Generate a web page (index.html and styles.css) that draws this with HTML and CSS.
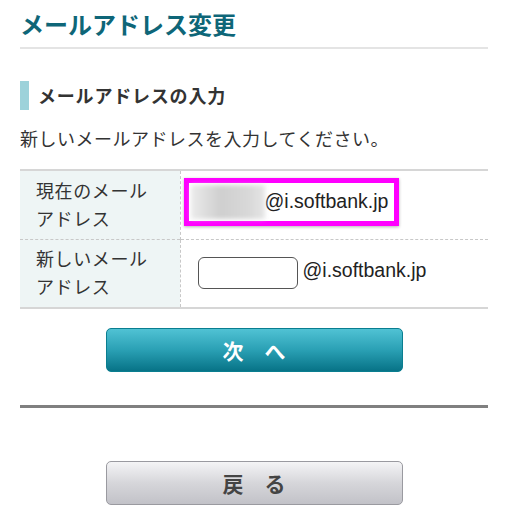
FILE: index.html
```html
<!DOCTYPE html>
<html lang="ja">
<head>
    <meta charset="UTF-8">
    <meta name="viewport" content="width=device-width, initial-scale=1.0">
    <title>メールアドレス変更</title>
    <link rel="stylesheet" href="styles.css">
</head>
<body>

    <h1 class="titulo">メールアドレス変更</h1>

    <h2 class="seccion">メールアドレスの入力</h2>
    <p class="guia">新しいメールアドレスを入力してください。</p>

    <table class="tabla">
        <tr>
            <th>現在のメール<br>アドレス</th>
            <td>
                <div class="actual">
                    <span class="oculto"></span><span class="dominio">@i.softbank.jp</span>
                </div>
            </td>
        </tr>
        <tr>
            <th>新しいメール<br>アドレス</th>
            <td>
                <input type="text" class="campo"><span class="dominio">@i.softbank.jp</span>
            </td>
        </tr>
    </table>

    <div class="acciones">
        <button class="btn btn-siguiente">次　へ</button>
    </div>

    <hr class="separador">

    <div class="acciones">
        <button class="btn btn-volver">戻　る</button>
    </div>

</body>
</html>
```

FILE: styles.css
```css
body { margin: 0; padding: 0 20px; background-color: #fff; color: #333; font-family: "Noto Sans CJK JP", "Liberation Sans", sans-serif; }
.titulo { margin: 0; padding: 7px 0 7px; font-size: 24px; line-height: 33px; color: #0e6678; border-bottom: 2px solid #e4e4e4; }
.seccion { margin: 32px 0 0; padding-left: 9px; border-left: 9px solid #9dd2da; font-size: 18px; letter-spacing: 0.8px; line-height: 29px; color: #333; }
.guia { margin: 14px 0 0; font-size: 18px; letter-spacing: 0.5px; line-height: 28px; }
.tabla { width: 100%; margin-top: 17px; border-collapse: collapse; border-top: 2px solid #d6d6d6; border-bottom: 2px solid #d6d6d6; }
.tabla th { width: 160px; box-sizing: border-box; padding: 0 0 2px 16px; height: 69px; background-color: #eef5f5; border-right: 1px dashed #c8c8c8; text-align: left; font-weight: normal; font-size: 18px; letter-spacing: 0.6px; line-height: 28px; color: #333; }
.tabla td { padding: 0 0 0 3px; }
.tabla tr + tr th, .tabla tr + tr td { border-top: 1px dashed #c8c8c8; }
.actual { display: flex; align-items: center; width: 200px; height: 38px; margin-bottom: 6px; padding: 0 5px 0 0; border: 5px solid #ff00ff; box-shadow: 0 1px 3px rgba(0, 0, 0, 0.3); background-color: #fff; }
.oculto { width: 74px; height: 34px; margin-left: 2px; background: linear-gradient(90deg, #ebebeb, #cfcfcf 40%, #d9d9d9 80%, #e6e6e6); filter: blur(2px); }
.dominio { font-family: "Liberation Sans", Arial, sans-serif; font-size: 19.5px; color: #222; }
.campo { box-sizing: border-box; width: 100px; height: 32px; margin: 0 5px 0 14px; padding: 0 4px; border: 1.5px solid #555; border-radius: 6px; vertical-align: middle; }
.acciones { display: flex; justify-content: center; }
.btn { width: 297px; height: 44px; border-radius: 5px; font-family: "Noto Sans CJK JP", sans-serif; font-size: 21px; font-weight: bold; cursor: pointer; }
.btn-siguiente { margin-top: 19px; color: #fff; border: 1px solid #0a7e90; background: linear-gradient(#50c2d4, #2aa0b4 50%, #077387); }
.btn-volver { margin-top: 53px; color: #444; border: 1px solid #9a9aa0; background: linear-gradient(#f4f4f6, #d6d6da 50%, #c2c2c8); }
.separador { margin: 33px 0 0; border: 0; height: 3px; background-color: #808080; }
```
